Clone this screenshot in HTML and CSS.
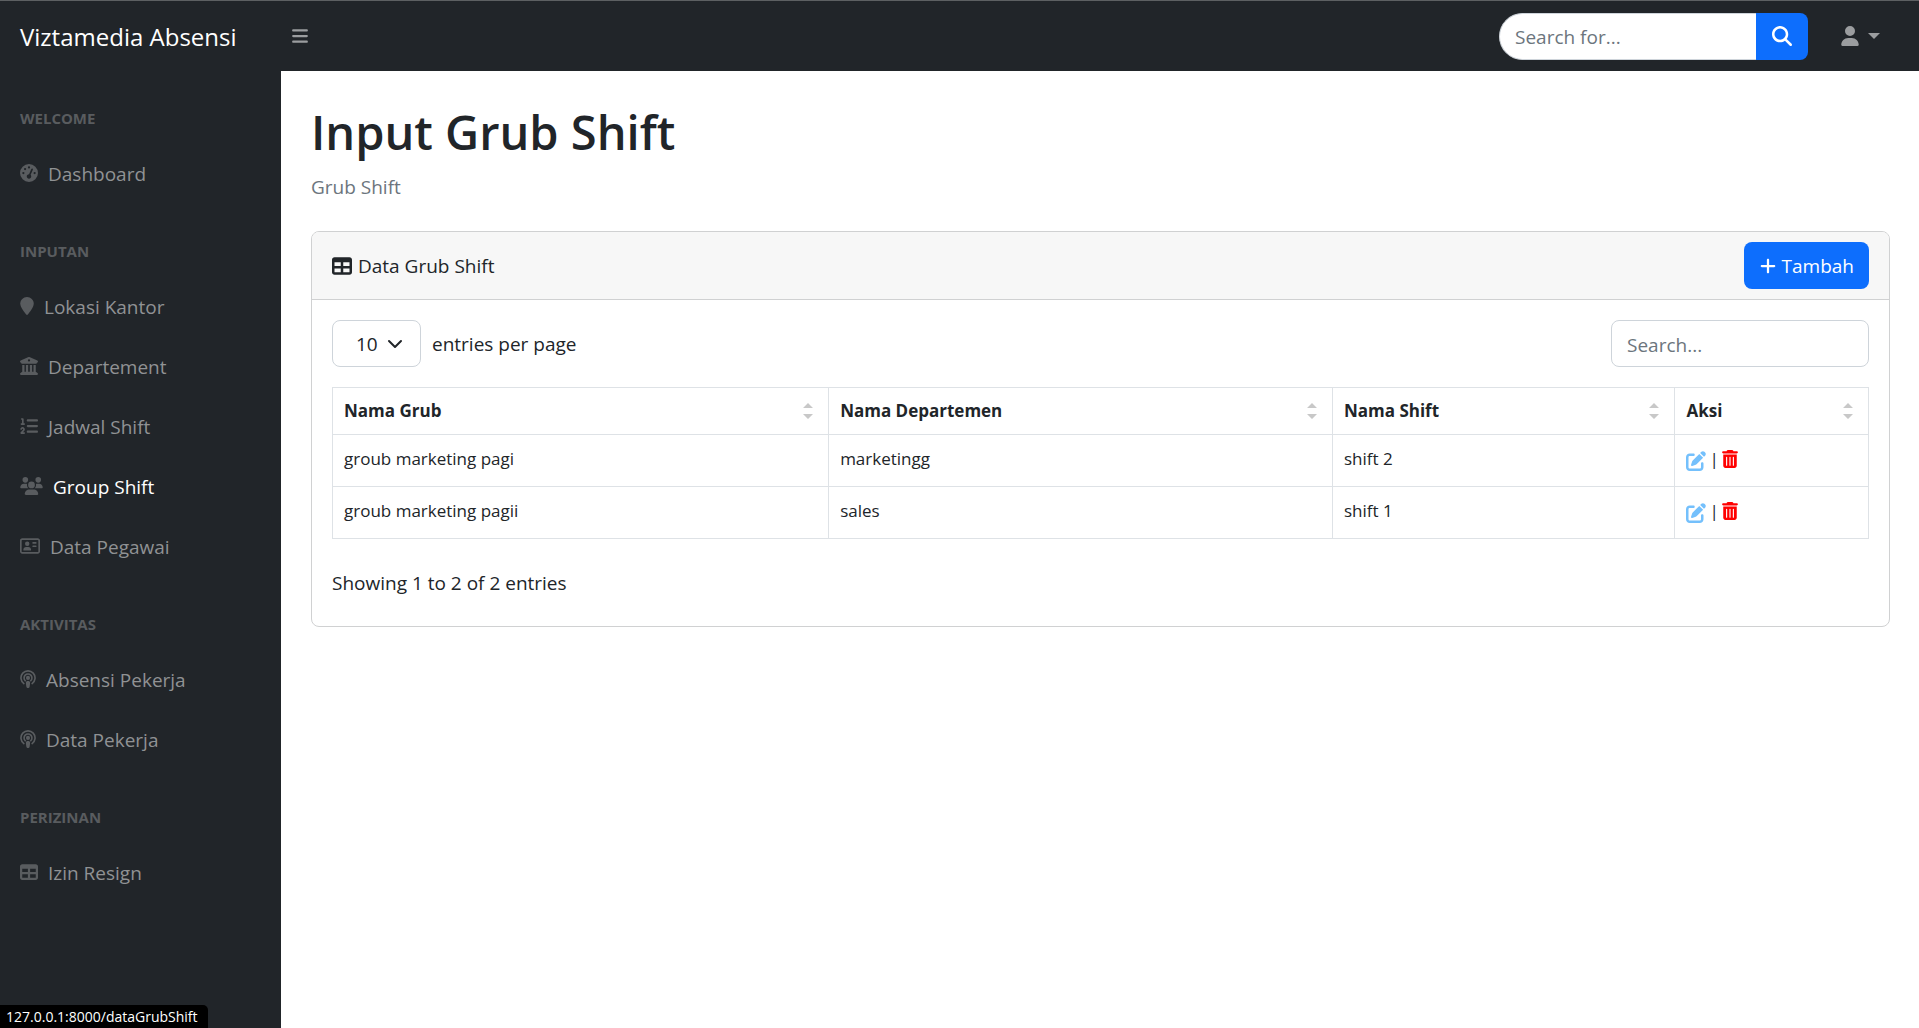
FILE: index.html
```html
<!DOCTYPE html>
<html lang="id">
<head>
<meta charset="utf-8">
<meta name="viewport" content="width=device-width, initial-scale=1">
<title>Viztamedia Absensi</title>
<link rel="stylesheet" href="styles.css">
</head>
<body>
<svg class="sprite" aria-hidden="true">
  <symbol id="bars" viewBox="0 0 448 512"><path d="M0 96C0 78.300 14.300 64 32 64H416c17.700 0 32 14.300 32 32s-14.300 32-32 32H32C14.300 128 0 113.700 0 96zM0 256c0-17.700 14.300-32 32-32H416c17.700 0 32 14.300 32 32s-14.300 32-32 32H32c-17.700 0-32-14.300-32-32zM448 416c0 17.700-14.300 32-32 32H32c-17.700 0-32-14.300-32-32s14.300-32 32-32H416c17.700 0 32 14.300 32 32z"/></symbol>
  <symbol id="search" viewBox="0 0 512 512"><path d="M416 208c0 45.900-14.900 88.300-40 122.700L502.600 457.400c12.500 12.500 12.500 32.800 0 45.300s-32.800 12.500-45.300 0L330.700 376c-34.400 25.200-76.800 40-122.700 40C93.100 416 0 322.900 0 208S93.100 0 208 0S416 93.100 416 208zM208 352a144 144 0 1 0 0-288 144 144 0 1 0 0 288z"/></symbol>
  <symbol id="user" viewBox="0 0 448 512"><path d="M224 256A128 128 0 1 0 224 0a128 128 0 1 0 0 256zm-45.700 48C79.800 304 0 383.800 0 482.300C0 498.700 13.300 512 29.700 512H418.300c16.400 0 29.700-13.300 29.700-29.700C448 383.800 368.200 304 269.700 304H178.300z"/></symbol>
  <symbol id="gauge" viewBox="0 0 512 512"><path d="M0 256a256 256 0 1 1 512 0A256 256 0 1 1 0 256zM288 96a32 32 0 1 0 -64 0 32 32 0 1 0 64 0zM256 416c35.300 0 64-28.700 64-64c0-17.400-6.900-33.100-18.100-44.600L366 161.700c5.300-12.100-.2-26.300-12.300-31.600s-26.300 .2-31.600 12.300L257.900 288c-.6 0-1.300 0-1.900 0c-35.300 0-64 28.700-64 64s28.700 64 64 64zM176 144a32 32 0 1 0 -64 0 32 32 0 1 0 64 0zM96 288a32 32 0 1 0 0-64 32 32 0 1 0 0 64zm352-32a32 32 0 1 0 -64 0 32 32 0 1 0 64 0z"/></symbol>
  <symbol id="pin" viewBox="0 0 384 512"><path d="M384 192c0 87.400-117 243-168.300 307.200c-12.300 15.300-35.100 15.300-47.400 0C117 435 0 279.400 0 192C0 86 86 0 192 0S384 86 384 192z"/></symbol>
  <symbol id="columns" viewBox="0 0 512 512"><path d="M243.400 2.600l-224 96c-14 6-21.800 21-18.700 35.800S16.800 160 32 160v8c0 13.300 10.700 24 24 24H456c13.300 0 24-10.700 24-24v-8c15.200 0 28.300-10.700 31.300-25.600s-4.800-29.900-18.700-35.800l-224-96c-8-3.400-17.200-3.400-25.200 0zM128 224H64V420.300c-.6 .3-1.200 .7-1.800 1.100l-48 32c-11.700 7.800-17 22.400-12.900 35.900S17.900 512 32 512H480c14.100 0 26.500-9.200 30.600-22.700s-1.100-28.100-12.900-35.900l-48-32c-.6-.4-1.200-.7-1.800-1.100V224H384V416H344V224H280V416H232V224H168V416H128V224zM256 64a32 32 0 1 1 0 64 32 32 0 1 1 0-64z"/></symbol>
  <symbol id="list" viewBox="0 0 512 512"><path d="M24 56c0-13.300 10.700-24 24-24H80c13.300 0 24 10.700 24 24V176h16c13.300 0 24 10.700 24 24s-10.700 24-24 24H40c-13.300 0-24-10.700-24-24s10.700-24 24-24H56V80H48C34.700 80 24 69.300 24 56zM86.700 341.200c-6.500-7.400-18.300-6.900-24 1.200L51.500 357.900c-7.700 10.800-22.700 13.300-33.500 5.600s-13.300-22.700-5.600-33.500l11.100-15.600c23.700-33.200 72.300-35.600 99.200-4.900c21.300 24.400 20.800 60.900-1.100 84.700L86.800 432H120c13.300 0 24 10.700 24 24s-10.700 24-24 24H32c-9.500 0-18.200-5.600-22-14.400s-2.100-18.900 4.300-25.900l72-78c5.300-5.800 5.400-14.600 .3-20.500zM224 64H480c17.700 0 32 14.300 32 32s-14.300 32-32 32H224c-17.700 0-32-14.300-32-32s14.300-32 32-32zm0 160H480c17.700 0 32 14.300 32 32s-14.300 32-32 32H224c-17.700 0-32-14.300-32-32s14.300-32 32-32zm0 160H480c17.700 0 32 14.300 32 32s-14.300 32-32 32H224c-17.700 0-32-14.300-32-32s14.300-32 32-32z"/></symbol>
  <symbol id="users" viewBox="0 0 640 512"><path d="M144 0a80 80 0 1 1 0 160A80 80 0 1 1 144 0zM512 0a80 80 0 1 1 0 160A80 80 0 1 1 512 0zM0 298.700C0 239.800 47.800 192 106.700 192h42.700c15.900 0 31 3.500 44.600 9.700c-1.300 7.200-1.900 14.700-1.900 22.300c0 38.200 16.800 72.500 43.300 96H21.300C9.600 320 0 310.400 0 298.700zM405.300 320c26.600-23.500 43.300-57.800 43.300-96c0-7.600-.7-15-1.900-22.300c13.600-6.300 28.700-9.700 44.600-9.700h42.700C592.200 192 640 239.800 640 298.700c0 11.800-9.600 21.300-21.300 21.300H405.300zM224 224a96 96 0 1 1 192 0 96 96 0 1 1 -192 0zM128 485.300C128 411.700 187.700 352 261.300 352H378.700C452.300 352 512 411.700 512 485.300c0 14.700-11.900 26.700-26.700 26.700H154.700c-14.700 0-26.700-11.900-26.700-26.700z"/></symbol>
  <symbol id="card" viewBox="0 0 576 512"><path d="M512 80c8.800 0 16 7.200 16 16V416c0 8.800-7.200 16-16 16H64c-8.800 0-16-7.200-16-16V96c0-8.800 7.200-16 16-16H512zM64 32C28.700 32 0 60.700 0 96V416c0 35.300 28.700 64 64 64H512c35.300 0 64-28.700 64-64V96c0-35.300-28.700-64-64-64H64zM208 256a64 64 0 1 0 0-128 64 64 0 1 0 0 128zm-32 32c-44.200 0-80 35.800-80 80c0 8.800 7.200 16 16 16H304c8.800 0 16-7.200 16-16c0-44.200-35.800-80-80-80H176zM376 144c-13.300 0-24 10.700-24 24s10.700 24 24 24h80c13.300 0 24-10.700 24-24s-10.700-24-24-24H376zm0 96c-13.300 0-24 10.700-24 24s10.700 24 24 24h80c13.300 0 24-10.700 24-24s-10.700-24-24-24H376z"/></symbol>
  <symbol id="podcast" viewBox="0 0 448 512"><path d="M106 385A200 200 0 1 1 342 385M146 305A112 112 0 1 1 302 305" fill="none" stroke="currentColor" stroke-width="46" stroke-linecap="round"/><circle cx="224" cy="224" r="58"/><path d="M224 312c-32 0-60 14-60 44 0 34 8 94 14 122 4 24 22 34 46 34s42-10 46-34c6-28 14-88 14-122 0-30-28-44-60-44z"/></symbol>
  <symbol id="table" viewBox="0 0 512 512"><path d="M64 256V160H224v96H64zm0 64H224v96H64V320zm224 96V320H448v96H288zM448 256H288V160H448v96zM64 32C28.700 32 0 60.700 0 96V416c0 35.300 28.700 64 64 64H448c35.300 0 64-28.700 64-64V96c0-35.300-28.700-64-64-64H64z"/></symbol>
  <symbol id="plus" viewBox="0 0 448 512"><path d="M256 80c0-17.700-14.300-32-32-32s-32 14.300-32 32V224H48c-17.700 0-32 14.300-32 32s14.300 32 32 32H192V432c0 17.700 14.300 32 32 32s32-14.300 32-32V288H400c17.700 0 32-14.300 32-32s-14.300-32-32-32H256V80z"/></symbol>
  <symbol id="edit" viewBox="0 0 512 512"><path d="M471.600 21.700c-21.900-21.900-57.300-21.900-79.200 0L362.300 51.700l97.900 97.900 30.100-30.100c21.900-21.900 21.900-57.300 0-79.200L471.600 21.700zm-299.200 220c-6.100 6.100-10.800 13.600-13.500 21.900l-29.600 88.800c-2.900 8.600-.6 18.100 5.800 24.600s15.900 8.700 24.600 5.800l88.800-29.600c8.200-2.700 15.700-7.400 21.900-13.500L437.700 172.300 339.700 74.300 172.400 241.700zM96 64C43 64 0 107 0 160V416c0 53 43 96 96 96H352c53 0 96-43 96-96V320c0-17.700-14.300-32-32-32s-32 14.300-32 32v96c0 17.700-14.300 32-32 32H96c-17.700 0-32-14.300-32-32V160c0-17.700 14.300-32 32-32h96c17.700 0 32-14.300 32-32s-14.300-32-32-32H96z"/></symbol>
  <symbol id="trash" viewBox="0 0 448 512"><path fill-rule="evenodd" d="M135.200 17.700L128 32H32C14.300 32 0 46.300 0 64S14.300 96 32 96H416c17.700 0 32-14.300 32-32s-14.300-32-32-32H320l-7.200-14.300C307.400 6.800 296.300 0 284.200 0H163.800c-12.100 0-23.200 6.800-28.600 17.700zM32 128V448c0 35.300 28.700 64 64 64H352c35.300 0 64-28.700 64-64V128H32zM112 208a16 16 0 0 1 32 0V432a16 16 0 0 1 -32 0zM208 208a16 16 0 0 1 32 0V432a16 16 0 0 1 -32 0zM304 208a16 16 0 0 1 32 0V432a16 16 0 0 1 -32 0z"/></symbol>
  <symbol id="chevron" viewBox="0 0 16 16"><path d="M2 5l6 6 6-6" fill="none" stroke="currentColor" stroke-width="2" stroke-linecap="round" stroke-linejoin="round"/></symbol>
  <symbol id="sort" viewBox="0 0 10 16"><path d="M0 5l5-5 5 5zM0 11h10l-5 5z"/></symbol>
</svg>

<header class="topbar">
  <a class="brand" href="#">Viztamedia Absensi</a>
  <button class="toggle" type="button" aria-label="Toggle sidebar"><svg class="icon-toggle"><use href="#bars"/></svg></button>
  <form class="topsearch">
    <input class="topsearch-input" type="text" placeholder="Search for..." aria-label="Search for...">
    <button class="topsearch-button" type="button" aria-label="Search"><svg class="icon-lg"><use href="#search"/></svg></button>
  </form>
  <button class="account" type="button" aria-label="Account"><svg class="icon-user"><use href="#user"/></svg><span class="caret"></span></button>
</header>

<div class="layout">
  <nav class="sidebar">
    <div class="nav-heading">Welcome</div>
    <a class="nav-link" href="#"><svg class="nav-icon"><use href="#gauge"/></svg>Dashboard</a>
    <div class="nav-heading">Inputan</div>
    <a class="nav-link" href="#"><svg class="nav-icon w-pin"><use href="#pin"/></svg>Lokasi Kantor</a>
    <a class="nav-link" href="#"><svg class="nav-icon"><use href="#columns"/></svg>Departement</a>
    <a class="nav-link" href="#"><svg class="nav-icon"><use href="#list"/></svg>Jadwal Shift</a>
    <a class="nav-link active" href="#"><svg class="nav-icon w-users"><use href="#users"/></svg>Group Shift</a>
    <a class="nav-link" href="#"><svg class="nav-icon w-card"><use href="#card"/></svg>Data Pegawai</a>
    <div class="nav-heading">Aktivitas</div>
    <a class="nav-link" href="#"><svg class="nav-icon w-podcast"><use href="#podcast"/></svg>Absensi Pekerja</a>
    <a class="nav-link" href="#"><svg class="nav-icon w-podcast"><use href="#podcast"/></svg>Data Pekerja</a>
    <div class="nav-heading">Perizinan</div>
    <a class="nav-link" href="#"><svg class="nav-icon"><use href="#table"/></svg>Izin Resign</a>
  </nav>

  <main class="content">
    <h1 class="title">Input Grub Shift</h1>
    <div class="breadcrumb">Grub Shift</div>

    <section class="card">
      <div class="card-header">
        <div class="card-title"><svg class="icon-lg"><use href="#table"/></svg>Data Grub Shift</div>
        <button class="add" type="button"><svg class="icon-plus"><use href="#plus"/></svg>Tambah</button>
      </div>
      <div class="card-body">
        <div class="controls">
          <label class="per-page">
            <span class="select-wrap">
              <select class="select"><option>5</option><option selected>10</option><option>15</option><option>20</option><option>25</option></select>
              <svg class="select-chevron"><use href="#chevron"/></svg>
            </span>
            entries per page
          </label>
          <input class="table-search" type="search" placeholder="Search..." aria-label="Search within table">
        </div>
        <table class="data">
          <colgroup><col class="col-grub"><col class="col-dept"><col class="col-shift"><col class="col-aksi"></colgroup>
          <thead>
            <tr>
              <th scope="col"><div class="th">Nama Grub<svg class="sort"><use href="#sort"/></svg></div></th>
              <th scope="col"><div class="th">Nama Departemen<svg class="sort"><use href="#sort"/></svg></div></th>
              <th scope="col"><div class="th">Nama Shift<svg class="sort"><use href="#sort"/></svg></div></th>
              <th scope="col"><div class="th">Aksi<svg class="sort"><use href="#sort"/></svg></div></th>
            </tr>
          </thead>
          <tbody>
            <tr>
              <td>groub marketing pagi</td><td>marketingg</td><td>shift 2</td>
              <td><div class="actions"><a class="edit" href="#" aria-label="Edit"><svg class="icon-lg"><use href="#edit"/></svg></a><span>|</span><a class="delete" href="#" aria-label="Hapus"><svg class="icon-trash"><use href="#trash"/></svg></a></div></td>
            </tr>
            <tr>
              <td>groub marketing pagii</td><td>sales</td><td>shift 1</td>
              <td><div class="actions"><a class="edit" href="#" aria-label="Edit"><svg class="icon-lg"><use href="#edit"/></svg></a><span>|</span><a class="delete" href="#" aria-label="Hapus"><svg class="icon-trash"><use href="#trash"/></svg></a></div></td>
            </tr>
          </tbody>
        </table>
        <div class="info">Showing 1 to 2 of 2 entries</div>
      </div>
    </section>
  </main>
</div>
<div class="status">127.0.0.1:8000/dataGrubShift</div>
</body>
</html>
```
FILE: styles.css
```css
*, *::before, *::after { box-sizing: border-box; }

body {
  margin: 0;
  min-height: 100vh;
  display: flex;
  flex-direction: column;
  font-family: "Open Sans", "Noto Sans", sans-serif;
  font-size: 19px;
  line-height: 30px;
  color: #212529;
  background: #fff;
}

a { color: inherit; text-decoration: none; }
button, input, select { font: inherit; color: inherit; margin: 0; }
button { border: 0; background: none; padding: 0; cursor: pointer; }
svg { fill: currentColor; flex: none; display: block; }
.sprite { position: absolute; width: 0; height: 0; }
.icon-lg { width: 20px; height: 20px; }

/* Top bar */
.topbar {
  display: flex;
  align-items: center;
  height: 71px;
  padding-right: 39px;
  border-top: 1px solid #5d6062;
  background: #212529;
  color: #9b9d9f;
}
.brand { width: 281px; padding: 2px 0 0 20px; font-size: 24px; color: #fff; }
.toggle { padding: 10px 11px; }
.icon-toggle { width: 16px; height: 18px; }
.topsearch { display: flex; margin-left: auto; margin-right: 33px; }
.topsearch-input {
  width: 257px;
  height: 47px;
  padding: 2px 15px 0;
  border: 1px solid #ced4da;
  border-right: 0;
  border-radius: 24px 0 0 24px;
  background: #fff;
  color: #212529;
}
.topsearch-button {
  display: flex;
  align-items: center;
  justify-content: center;
  width: 52px;
  border-radius: 0 8px 8px 0;
  background: #0d6efd;
  color: #fff;
}
input::placeholder { color: #6c757d; opacity: 1; }
.account { display: flex; align-items: center; gap: 9px; }
.icon-user { width: 18px; height: 20px; }
.caret { border: 6px solid transparent; border-top-color: currentColor; border-bottom: 0; }

/* Sidebar */
.layout { display: flex; flex: 1; }
.sidebar { flex: none; width: 281px; background: #212529; color: #909294; }
.nav-heading {
  padding: 36px 20px 15px;
  font-size: 15px;
  font-weight: 700;
  line-height: 22px;
  text-transform: uppercase;
  color: #595c5f;
}
.nav-link { display: flex; align-items: center; gap: 10px; padding: 15px 20px; }
.nav-link.active { color: #fff; }
.nav-icon { width: 18px; height: 18px; margin-bottom: 2px; color: #595c5f; }
.w-pin { width: 14px; }
.w-users { width: 23px; }
.w-card { width: 20px; }
.w-podcast { width: 16px; }

/* Content */
.content { flex: 1; min-width: 0; padding: 30px 29px 30px 30px; }
.title { margin: 0 0 8px; font-size: 47px; font-weight: 600; line-height: 63px; }
.breadcrumb { margin-bottom: 29px; color: #6c757d; }

.card { border: 1px solid #d0d1d2; border-radius: 8px; }
.card-header {
  display: flex;
  align-items: center;
  justify-content: space-between;
  padding: 10px 20px;
  border-bottom: 1px solid #d0d1d2;
  border-radius: 7px 7px 0 0;
  background: #f7f7f7;
}
.card-title { display: flex; align-items: center; gap: 6px; }
.add {
  display: flex;
  align-items: center;
  gap: 5px;
  height: 47px;
  padding: 0 15px;
  border-radius: 8px;
  background: #0d6efd;
  color: #fff;
}
.icon-plus { width: 18px; height: 18px; }

.card-body { padding: 20px; }
.controls { display: flex; align-items: center; justify-content: space-between; margin-bottom: 20px; }
.per-page { display: flex; align-items: center; gap: 11px; }
.select-wrap { display: grid; align-items: center; }
.select {
  grid-area: 1 / 1;
  width: 89px;
  height: 47px;
  padding: 0 0 0 23px;
  border: 1px solid #ced4da;
  border-radius: 8px;
  background: #fff;
  appearance: none;
}
.select-chevron {
  grid-area: 1 / 1;
  justify-self: end;
  width: 16px;
  height: 16px;
  margin-right: 18px;
  pointer-events: none;
}
.table-search {
  width: 258px;
  height: 47px;
  padding: 2px 15px 0;
  border: 1px solid #ced4da;
  border-radius: 8px;
  background: #fff;
  appearance: none;
}

.data { width: 100%; table-layout: fixed; border-collapse: collapse; font-size: 17px; }
.data th, .data td { border: 1px solid #dee2e6; padding: 0 11px; text-align: left; }
.data th { height: 47px; font-weight: 700; }
.data td { height: 52px; padding-bottom: 4px; }
.col-grub { width: 32.3%; }
.col-dept { width: 32.8%; }
.col-shift { width: 22.3%; }
.th { display: flex; align-items: center; justify-content: space-between; padding-right: 4px; }
.sort { width: 10px; height: 16px; color: #c8c8c8; }
.actions { display: flex; align-items: center; gap: 3px; }
.edit { padding-top: 4px; color: #74c0fc; }
.delete { color: #f00; }
.icon-trash { width: 16px; height: 18px; }
.info { padding: 29px 0 8px; }

/* Link target shown in the window corner */
.status {
  position: fixed;
  left: 0;
  bottom: 0;
  padding: 0 10px 0 6px;
  border-top-right-radius: 5px;
  font-size: 14px;
  line-height: 23px;
  background: #000;
  color: #fff;
}
```
